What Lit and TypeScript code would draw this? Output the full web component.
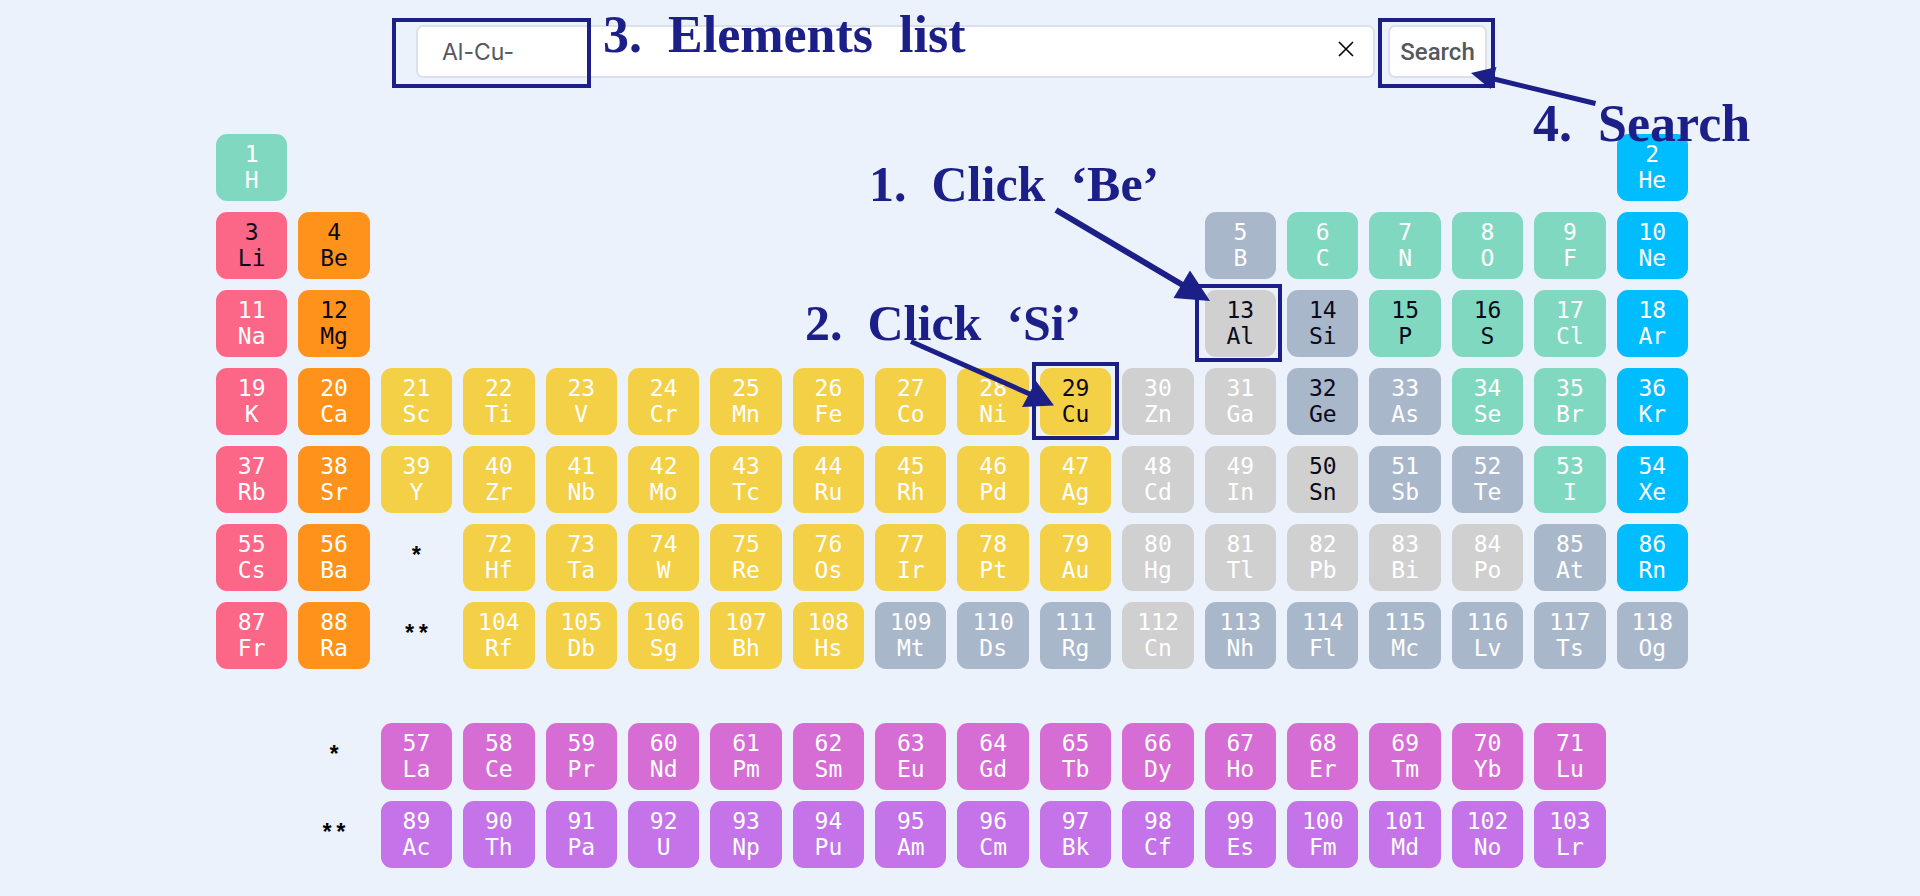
import { LitElement, html, css, nothing } from "lit";
import { customElement, property, state } from "lit/decorators.js";
import { classMap } from "lit/directives/class-map.js";

/* One string per period: "number symbol group", "." for an empty cell,
   "*" and "**" for the footnote marks. A trailing "!" marks an available element. */
const MAIN = `
1 H n|.|.|.|.|.|.|.|.|.|.|.|.|.|.|.|.|2 He g
3 Li a !|4 Be e !|.|.|.|.|.|.|.|.|.|.|5 B m|6 C n|7 N n|8 O n|9 F n|10 Ne g
11 Na a|12 Mg e !|.|.|.|.|.|.|.|.|.|.|13 Al p !|14 Si m !|15 P n !|16 S n !|17 Cl n|18 Ar g
19 K a|20 Ca e|21 Sc t|22 Ti t|23 V t|24 Cr t|25 Mn t|26 Fe t|27 Co t|28 Ni t|29 Cu t !|30 Zn p|31 Ga p|32 Ge m !|33 As m|34 Se n|35 Br n|36 Kr g
37 Rb a|38 Sr e|39 Y t|40 Zr t|41 Nb t|42 Mo t|43 Tc t|44 Ru t|45 Rh t|46 Pd t|47 Ag t|48 Cd p|49 In p|50 Sn p !|51 Sb m|52 Te m|53 I n|54 Xe g
55 Cs a|56 Ba e|*|72 Hf t|73 Ta t|74 W t|75 Re t|76 Os t|77 Ir t|78 Pt t|79 Au t|80 Hg p|81 Tl p|82 Pb p|83 Bi p|84 Po p|85 At m|86 Rn g
87 Fr a|88 Ra e|**|104 Rf t|105 Db t|106 Sg t|107 Bh t|108 Hs t|109 Mt m|110 Ds m|111 Rg m|112 Cn p|113 Nh m|114 Fl m|115 Mc m|116 Lv m|117 Ts m|118 Og m`;

const SERIES = `
.|*|57 La l|58 Ce l|59 Pr l|60 Nd l|61 Pm l|62 Sm l|63 Eu l|64 Gd l|65 Tb l|66 Dy l|67 Ho l|68 Er l|69 Tm l|70 Yb l|71 Lu l|.
.|**|89 Ac c|90 Th c|91 Pa c|92 U c|93 Np c|94 Pu c|95 Am c|96 Cm c|97 Bk c|98 Cf c|99 Es c|100 Fm c|101 Md c|102 No c|103 Lr c|.`;

const GROUPS: Record<string, string> = {
  n: "nonmetal",
  g: "noble",
  a: "alkali",
  e: "earth",
  m: "metalloid",
  p: "post",
  t: "transition",
  l: "lanthanide",
  c: "actinide",
};

const parse = (text: string) => text.trim().split(/[|\n]/);

@customElement("element-grid")
export class ElementGrid extends LitElement {
  @property({ attribute: false }) cells: string[] = [];

  static styles = css`
    :host {
      display: grid;
      grid-template-columns: repeat(18, minmax(0, 1fr));
      grid-auto-rows: 67px;
      gap: 11px;
    }
    .tile,
    .mark {
      font-family: "DejaVu Sans Mono", "Liberation Mono", monospace;
      font-size: 23px;
      line-height: 26px;
    }
    .tile {
      display: flex;
      flex-direction: column;
      align-items: center;
      justify-content: center;
      border: 0;
      border-radius: 11px;
      padding: 0 0 2px;
      color: #fff;
      cursor: pointer;
    }
    .mark {
      display: flex;
      align-items: center;
      justify-content: center;
      color: #000;
      font-family: "Liberation Mono", monospace;
      font-weight: bold;
    }
    .available { color: #0a0a1c; }
    .nonmetal { background: #81d8c0; }
    .noble { background: #00bdff; }
    .alkali { background: #fc6788; }
    .earth { background: #ff921b; }
    .metalloid { background: #a9b7cb; }
    .post { background: #d0d0d0; }
    .transition { background: #f4d046; }
    .lanthanide { background: #d66dd5; }
    .actinide { background: #c473e9; }
  `;

  private pick(symbol: string) {
    this.dispatchEvent(new CustomEvent("pick", { detail: symbol }));
  }

  render() {
    return this.cells.map((cell) => {
      if (cell === ".") return html`<span></span>`;
      if (cell.startsWith("*")) return html`<span class="mark">${cell}</span>`;
      const [number, symbol, group, flag] = cell.split(" ");
      const classes = { tile: true, available: flag === "!", [GROUPS[group]]: true };
      return html`<button class=${classMap(classes)} @click=${() => this.pick(symbol)}>
        <span>${number}</span><span>${symbol}</span>
      </button>`;
    });
  }
}

@customElement("app-root")
export class AppRoot extends LitElement {
  @state() private query = "Al-Cu-";

  static styles = css`
    :host {
      display: block;
      position: relative;
      box-sizing: border-box;
      min-height: 100vh;
      padding: 25px 0 27px;
      overflow: hidden;
      background: #ebf2fc;
    }
    .search {
      display: flex;
      gap: 13px;
      margin: 0 433px 56px 416px;
      font-family: Roboto, "Liberation Sans", sans-serif;
    }
    .field {
      display: flex;
      flex: 1;
      align-items: center;
      min-width: 0;
    }
    .field,
    .submit {
      box-sizing: border-box;
      height: 53px;
      border: 2px solid #dce0e9;
      border-radius: 7px;
      background: #fff;
      color: #55585c;
    }
    .query {
      flex: 1;
      min-width: 0;
      border: 0;
      padding: 0 24px;
      outline: 0;
      background: none;
      color: inherit;
      font: 23px Inter, "Liberation Sans", sans-serif;
    }
    .clear {
      display: flex;
      border: 0;
      padding: 0 19px 6px;
      background: none;
      cursor: pointer;
    }
    .submit {
      flex: none;
      width: 99px;
      padding: 0;
      font: inherit;
      font-size: 24px;
      font-weight: 500;
      cursor: pointer;
    }
    .table {
      display: grid;
      gap: 54px;
      margin: 0 232px 0 216px;
    }
    .guide {
      position: absolute;
      top: 0;
      left: 0;
      pointer-events: none;
    }
    .note {
      position: absolute;
      color: #1c1f88;
      font: bold 50px/56px "Liberation Serif", serif;
      white-space: pre;
      pointer-events: none;
    }
    .note-be { left: 869px; top: 156px; }
    .note-si { left: 805px; top: 295px; }
    .note-list,
    .note-search { font-size: 52px; }
    .note-list { left: 603px; top: 7px; }
    .note-search { left: 1533px; top: 96px; }
  `;

  private add(event: CustomEvent<string>) {
    this.query += `${event.detail}-`;
  }

  render() {
    return html`
      <form class="search" @submit=${(e: Event) => e.preventDefault()}>
        <div class="field">
          <input
            class="query"
            aria-label="Elements list"
            .value=${this.query}
            @input=${(e: Event) => (this.query = (e.target as HTMLInputElement).value)}
          />
          ${this.query
            ? html`<button class="clear" type="button" aria-label="Clear" @click=${() => (this.query = "")}>
                <svg width="16" height="16" viewBox="0 0 16 16" stroke="#000" stroke-width="1.6">
                  <path d="M1 1L15 15M15 1L1 15" />
                </svg>
              </button>`
            : nothing}
        </div>
        <button class="submit">Search</button>
      </form>
      <main class="table">
        <element-grid .cells=${parse(MAIN)} @pick=${this.add}></element-grid>
        <element-grid .cells=${parse(SERIES)} @pick=${this.add}></element-grid>
      </main>
      <svg class="guide" width="1920" height="896" aria-hidden="true">
        <g fill="none" stroke="#1c1f88" stroke-width="4">
          <rect x="394" y="20" width="195" height="66" />
          <rect x="1380" y="20" width="113" height="66" />
          <rect x="1197" y="286" width="83" height="74" />
          <rect x="1034" y="364" width="83" height="74" />
        </g>
        <g stroke="#1c1f88" stroke-width="5">
          <path d="M1056 210L1186 287" stroke-width="6" />
          <path d="M911 341.500L1032 395" />
          <path d="M1595.500 103.500L1492 78.500" />
        </g>
        <g fill="#1c1f88">
          <path d="M1210 301L1190 270.500L1173.500 298Z" />
          <path d="M1054 405.500L1036 381L1022 407Z" />
          <path d="M1471 73L1496.500 67L1490.500 89Z" />
        </g>
      </svg>
      <span class="note note-be">1.  Click  ‘Be’</span>
      <span class="note note-si">2.  Click  ‘Si’</span>
      <span class="note note-list">3.  Elements  list</span>
      <span class="note note-search">4.  Search</span>
    `;
  }
}
